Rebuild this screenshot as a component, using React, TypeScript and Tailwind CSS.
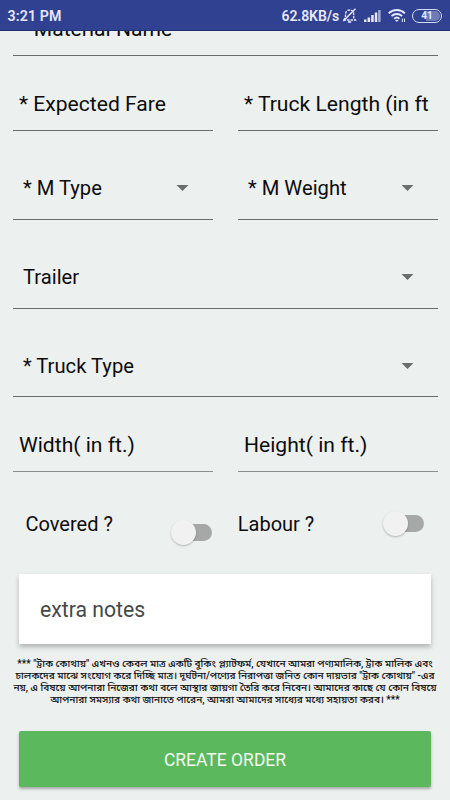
import type { ReactNode } from "react";

type FieldProps = {
    label: string
    className?: string
}

const Input = ({ label, className = "h-[75px] border-[#6b6d6d]" }: FieldProps) => (
    <div className={`flex flex-1 min-w-0 items-end border-b pl-[6.5px] pb-3.5 ${className}`}>
        <span className="whitespace-nowrap text-[21.1px] leading-6">{label}</span>
    </div>
)

const Select = ({ label, className = "h-[89px] pb-[19px]" }: FieldProps) => (
    <div className={`flex flex-1 items-end justify-between border-b border-[#6b6d6d] pr-6 pl-[10.5px] ${className}`}>
        <span className="whitespace-nowrap text-[20.2px] leading-6">{label}</span>
        <svg className="mb-[9px]" width="13" height="6" viewBox="0 0 13 6">
            <path d="M0.5 0h12l-6 6z" fill="#6c6e6e" />
        </svg>
    </div>
)

const Row = ({ children }: { children: ReactNode }) => (
    <div className="flex gap-[25px]">{children}</div>
)

const Toggle = () => (
    <div className="flex h-[26px] w-[41px] items-center">
        <span className="z-10 size-[25px] shrink-0 rounded-full bg-[#f1f1f1] shadow-[0_1px_2px_rgba(0,0,0,0.25)]" />
        <span className="-ml-3 h-[17px] w-7 shrink-0 rounded-full bg-[#a5a8a7]" />
    </div>
)

const StatusBar = () => (
    <header className="flex h-[31px] shrink-0 items-center justify-between border-b border-[#1d2f6d] bg-[#314192] pr-2 pl-[7.5px] text-[#e6e9fa]">
        <span className="pt-0.5 text-[14.2px] leading-none font-semibold tracking-[0.1px]">3:21 PM</span>
        <div className="flex items-center pt-px">
            <span className="mr-[3px] pt-px text-[14px] leading-none font-semibold tracking-[-0.1px]">62.8KB/s</span>

            {/* muted bell */}
            <svg className="mr-[7px]" width="15" height="15" viewBox="0 0 15 15" fill="none" stroke="currentColor" strokeWidth="1.3">
                <path d="M1.5 12h12l-1.8-2.2V6.2A4 4 0 0 0 7.6 2a4 4 0 0 0-4.1 4.2v3.6z" strokeDasharray="2.6 .9" />
                <path d="M6 14h3.2" strokeWidth="1.6" />
                <path d="M13.5.8L1.2 13" strokeWidth="1.5" />
            </svg>

            {/* signal */}
            <svg className="mr-[7px]" width="17" height="14" viewBox="0 0 17 14" fill="currentColor">
                <path d="M0 10.5h2.5v2.5H0zM3.6 8.5h2.5V13H3.6zM7.2 6h2.5v7H7.2zM10.8 3.5h2.5V13h-2.5z" />
                <path d="M14.2 1h2.4v12h-2.4z" opacity=".65" />
            </svg>

            {/* wifi */}
            <svg className="mr-[6px]" width="18" height="15" viewBox="0 0 18 15" fill="none" stroke="currentColor" strokeWidth="1.9">
                <path d="M.7 5.3a11.5 11.5 0 0 1 16.2 0M3.5 8.1a7.6 7.6 0 0 1 10.6 0M6.2 10.7a3.8 3.8 0 0 1 5.2 0" />
                <path d="M7 12l1.8 2 1.8-2z" fill="currentColor" stroke="none" />
                <path d="M14.3 14v-3.5M16.5 10.5V14" strokeWidth="1" />
            </svg>

            <div className="flex h-[14px] w-[30px] items-center justify-center rounded-full border-[1.5px] border-[#d5daf5] p-px">
                <div className="flex h-full w-full items-center justify-center rounded-full bg-[linear-gradient(90deg,#314192_45%,#6f7bb9_45%)] text-[10px] leading-none font-bold">
                    41
                </div>
            </div>
        </div>
    </header>
)

const App = () => {

    const notice = [
        "*** \"ট্রাক কোথায়\" এখনও কেবল মাত্র একটি বুকিং প্ল্যাটফর্ম, যেখানে আমরা পণ্যমালিক, ট্রাক মালিক এবং",
        "চালকদের মাঝে সংযোগ করে দিচ্ছি মাত্র। দূর্ঘটনা/পণ্যের নিরাপত্তা জনিত কোন দায়ভার \"ট্রাক কোথায়\" -এর",
        "নয়, এ বিষয়ে আপনারা নিজেরা কথা বলে আস্থার জায়গা তৈরি করে নিবেন। আমাদের কাছে যে কোন বিষয়ে",
        "আপনারা সমস্যার কথা জানাতে পারেন, আমরা আমাদের সাধ্যের মধ্যে সহায়তা করব। ***",
    ]

    return (
        <div className="flex h-[800px] w-[450px] flex-col overflow-hidden bg-[#ecf0ef] font-[Roboto,'Noto_Sans_Bengali','Noto_Sans',sans-serif] text-[#0c0c0c]">
            <StatusBar />

            <main className="px-[12.5px]">
                <div className="flex h-[25px] items-end overflow-hidden border-b border-[#6b6d6d] pl-[7px] pb-3.5">
                    <span className="text-[21.1px] leading-6">* Material Name</span>
                </div>
                <Row>
                    <Input label="* Expected Fare" />
                    <Input label="* Truck Length (in ft" />
                </Row>
                <Row>
                    <Select label="* M Type" />
                    <Select label="* M Weight" />
                </Row>
                <Row>
                    <Select label="Trailer" />
                </Row>
                <Row>
                    <Select label="* Truck Type" className="h-[88px] pb-[18px]" />
                </Row>
                <Row>
                    <Input label="Width( in ft.)" className="h-[75px] border-[#8b8d8d]" />
                    <Input label="Height( in ft.)" className="h-[75px] border-[#8b8d8d]" />
                </Row>

                <Row>
                    <div className="flex h-[102px] flex-1 items-start justify-between pr-px pl-[13px]">
                        <span className="pt-10 text-[20px] leading-6">Covered ?</span>
                        <div className="pt-[47px]"><Toggle /></div>
                    </div>
                    <div className="flex h-[102px] flex-1 items-start justify-between pr-[13.5px]">
                        <span className="pt-10 text-[20px] leading-6">Labour ?</span>
                        <div className="pt-[38px]"><Toggle /></div>
                    </div>
                </Row>
            </main>

            <div className="mx-[19px] flex h-[70px] shrink-0 items-center bg-white px-[21px] pt-0.5 text-[21.2px] text-[#484848] shadow-[0_3px_5px_rgba(0,0,0,0.25)]">
                extra notes
            </div>

            <div className="mt-[14px] flex flex-col items-center text-[10.1px] leading-3 font-medium">
                {notice.map((line) => (
                    <p key={line} className="whitespace-nowrap">{line}</p>
                ))}
            </div>

            <button className="mx-[19px] mt-[25px] h-14 shrink-0 rounded-xs bg-[#5cb85c] pt-0.5 text-[17.5px] text-[#f0faf0] shadow-[0_2px_3px_rgba(0,0,0,0.3)]">
                CREATE ORDER
            </button>
        </div>
    )
}

export default App;
